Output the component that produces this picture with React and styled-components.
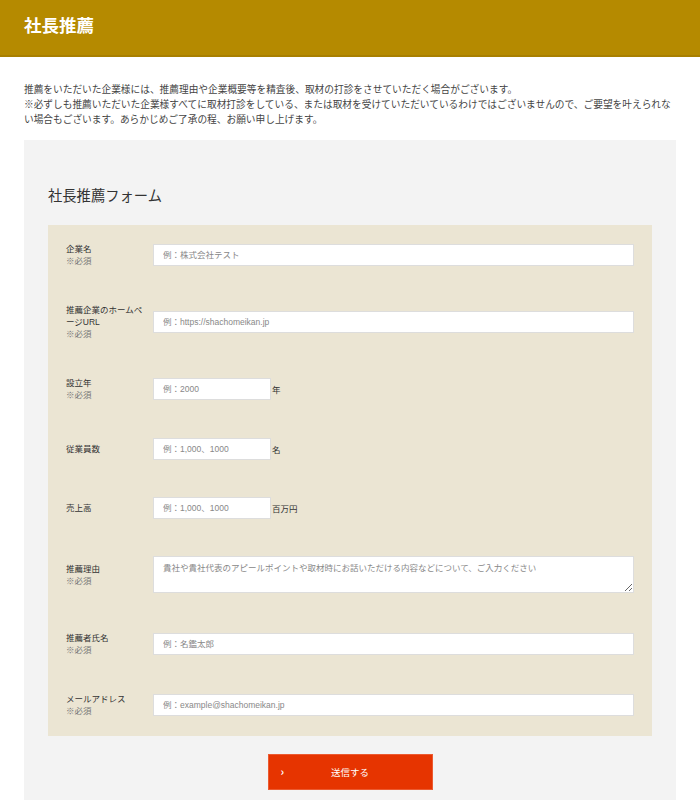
import React from 'react'
import styled, { createGlobalStyle } from 'styled-components'

const GlobalStyle = createGlobalStyle`
  * { box-sizing: border-box; }
  body {
    margin: 0;
    background: #fff;
    font-family: 'Liberation Sans', 'Noto Sans CJK JP', sans-serif;
    color: #333;
  }
`

const fields = [
  { label: '企業名', required: true, placeholder: '例：株式会社テスト' },
  { label: '推薦企業のホームページURL', required: true, placeholder: '例：https://shachomeikan.jp' },
  { label: '設立年', required: true, placeholder: '例：2000', unit: '年', short: true },
  { label: '従業員数', placeholder: '例：1,000、1000', unit: '名', short: true },
  { label: '売上高', placeholder: '例：1,000、1000', unit: '百万円', short: true },
  { label: '推薦理由', required: true, placeholder: '貴社や貴社代表のアピールポイントや取材時にお話いただける内容などについて、ご入力ください', multiline: true },
  { label: '推薦者氏名', required: true, placeholder: '例：名鑑太郎' },
  { label: 'メールアドレス', required: true, placeholder: '例：example@shachomeikan.jp' },
]

const App = () => {
  return (
    <>
      <GlobalStyle />
      <Header>
        <HeaderTitle>社長推薦</HeaderTitle>
      </Header>
      <Main>
        <Intro>
          推薦をいただいた企業様には、推薦理由や企業概要等を精査後、取材の打診をさせていただく場合がございます。
          <br />
          ※必ずしも推薦いただいた企業様すべてに取材打診をしている、または取材を受けていただいているわけではございませんので、ご要望を叶えられない場合もございます。あらかじめご了承の程、お願い申し上げます。
        </Intro>
        <Panel>
          <FormTitle>社長推薦フォーム</FormTitle>
          <FormBox>
            {fields.map((f) => (
              <Row key={f.label} $multiline={f.multiline}>
                <Label>
                  {f.label}
                  {f.required && <Required>※必須</Required>}
                </Label>
                <Control>
                  {f.multiline ? (
                    <TextArea placeholder={f.placeholder} />
                  ) : (
                    <Input placeholder={f.placeholder} $short={f.short} />
                  )}
                  {f.unit && <Unit>{f.unit}</Unit>}
                </Control>
              </Row>
            ))}
          </FormBox>
          <ButtonWrap>
            <SubmitButton type="button">
              <Arrow>›</Arrow>
              送信する
            </SubmitButton>
          </ButtonWrap>
        </Panel>
      </Main>
    </>
  )
}

const Header = styled.header`
  height: 57px;
  background: #b58a00;
  border-bottom: 2px solid #a87f00;
  display: flex;
  align-items: center;
  padding: 0 24px 6px;
`
const HeaderTitle = styled.h1`
  margin: 0;
  font-family: 'Noto Sans CJK JP', sans-serif;
  font-size: 17.5px;
  font-weight: 700;
  color: #fff;
`
const Main = styled.main`
  padding: 0 24px;
`
const Intro = styled.p`
  margin: 25px 0 13px;
  font-family: 'Noto Sans CJK JP', sans-serif;
  font-size: 9.7px;
  line-height: 15px;
  color: #444;
`
const Panel = styled.section`
  background: #f3f3f3;
  padding: 45px 24px 20px;
`
const FormTitle = styled.h2`
  margin: 0 0 20px;
  font-family: 'Noto Sans CJK JP', sans-serif;
  font-size: 14.3px;
  font-weight: 400;
  line-height: 20px;
  color: #333;
`
const FormBox = styled.div`
  background: #ebe5d3;
  padding: 18px 18px 19px;
  display: flex;
  flex-direction: column;
  gap: 37px;
`
const Row = styled.div`
  display: flex;
  align-items: center;
  margin-bottom: ${({ $multiline }) => ($multiline ? '2px' : '0')};
`
const Label = styled.div`
  width: 87px;
  flex-shrink: 0;
  padding-right: 4px;
  font-size: 8.5px;
  line-height: 12px;
  color: #333;
  display: flex;
  flex-direction: column;
`
const Required = styled.span`
  color: #777;
`
const Control = styled.div`
  flex: 1;
  display: flex;
  align-items: center;
`
const Input = styled.input`
  width: ${({ $short }) => ($short ? '118px' : '100%')};
  height: 22px;
  padding: 0 9px;
  border: 1px solid #ddd;
  background: #fff;
  font-family: inherit;
  font-size: 8.5px;
  color: #333;
  outline: none;
  &::placeholder {
    color: #888;
  }
`
const TextArea = styled.textarea`
  width: 100%;
  height: 37px;
  padding: 5px 9px;
  border: 1px solid #ddd;
  background: #fff;
  font-family: inherit;
  font-size: 8.5px;
  line-height: 12px;
  display: block;
  outline: none;
  &::placeholder {
    color: #888;
  }
`
const Unit = styled.span`
  font-size: 8.5px;
  color: #333;
  padding-left: 1px;
`
const ButtonWrap = styled.div`
  display: flex;
  justify-content: center;
  margin-top: 18px;
`
const SubmitButton = styled.button`
  position: relative;
  width: 165px;
  height: 36px;
  background: #e63400;
  border: 1px solid #ec5a30;
  color: #fff;
  font-family: 'Noto Sans CJK JP', sans-serif;
  font-size: 9.5px;
  cursor: pointer;
`
const Arrow = styled.span`
  position: absolute;
  left: 12px;
  top: 50%;
  transform: translateY(-55%);
  font-size: 11px;
  font-weight: 700;
`

export default App
